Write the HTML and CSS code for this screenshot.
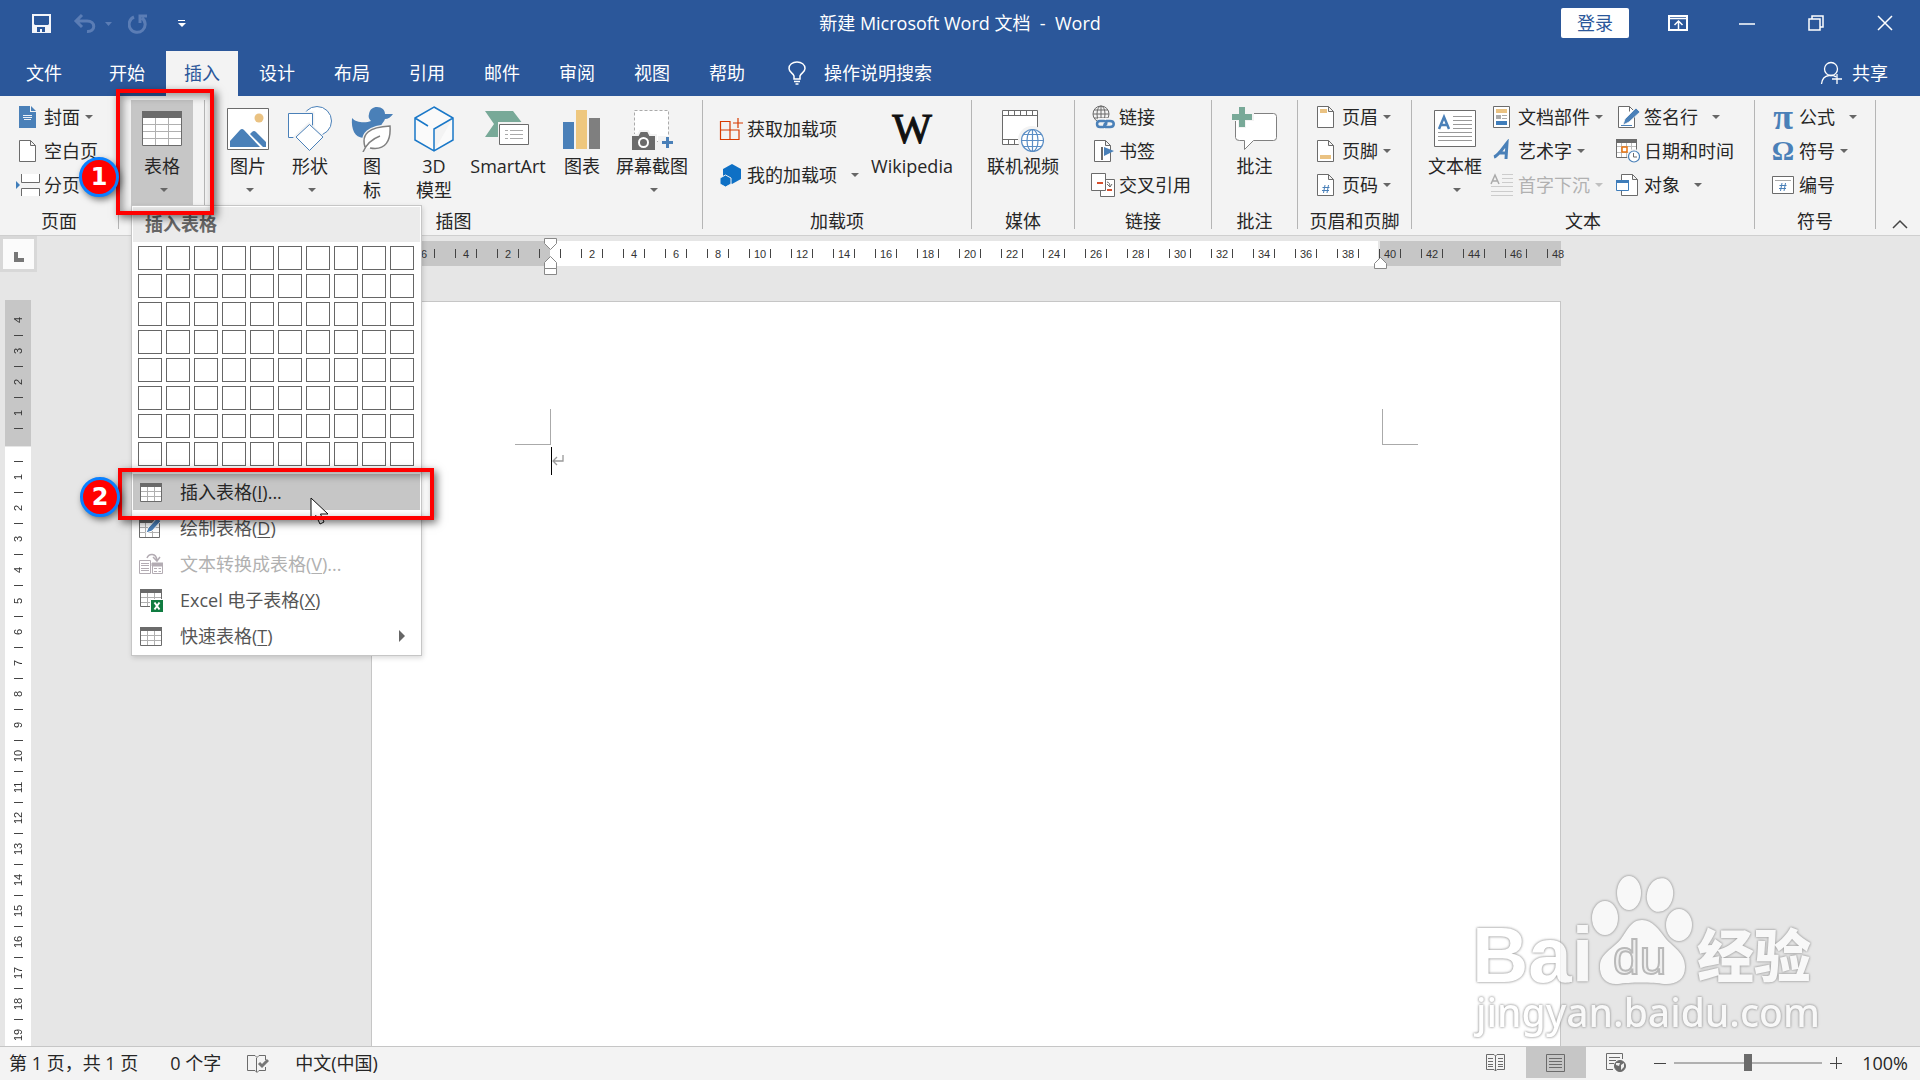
FILE: index.html
```html
<!DOCTYPE html>
<html lang="zh-CN">
<head>
<meta charset="utf-8">
<title>新建 Microsoft Word 文档 - Word</title>
<link rel="stylesheet" href="styles.css">
</head>
<body>
<header class="titlebar">
  <div class="quick">
    <button class="qbtn" aria-label="保存"><svg width="20" height="20" viewBox="0 0 20 20"><path fill="#f3f5fa" fill-rule="evenodd" d="M0 0H19V19H0ZM2 2V10L3 11H16L17 10V2ZM5 13V18H8V15H10V18H13V13Z"/></svg></button>
    <button class="qbtn qbtn--undo" aria-label="撤消"><svg width="36" height="20" viewBox="0 0 36 20" fill="none" stroke="#5b7db5" stroke-width="3"><path d="M8 1L2 7L8 13M2 7H13C22 7 22 18 13 17.500"/><path d="M31 8H38L34.500 12Z" fill="#5b7db5" stroke="none"/></svg></button>
    <button class="qbtn" aria-label="重复"><svg width="20" height="20" viewBox="0 0 20 20" fill="none" stroke="#5b7db5" stroke-width="3"><path d="M6 3A8 8 0 1 0 14 4M19 2H12V9"/></svg></button>
    <button class="qbtn qbtn--more" aria-label="自定义快速访问工具栏"><svg width="8" height="8" viewBox="0 0 8 8" fill="#fff"><path d="M0 0H7V1H0ZM0 3H8L4 7Z"/></svg></button>
  </div>
  <h1 class="title">新建 Microsoft Word 文档&nbsp; -&nbsp; Word</h1>
  <div class="winctl">
    <button class="login">登录</button>
    <button class="wbtn" aria-label="功能区显示选项"><svg width="20" height="16" viewBox="0 0 20 16" fill="none" stroke="#fff"><path stroke-width="2" d="M1 1H19V15H1Z"/><path d="M1 3.500H19M10.500 14V6M6.500 10L10.500 6L14.500 10" stroke-width="1.500"/></svg></button>
    <button class="wbtn" aria-label="最小化"><svg width="16" height="16" viewBox="0 0 16 16"><path d="M0 9H16" stroke="#fff" stroke-width="1.500"/></svg></button>
    <button class="wbtn" aria-label="还原"><svg width="16" height="16" viewBox="0 0 16 16" fill="none" stroke="#fff" stroke-width="1.500"><path d="M1 4H12V15H1ZM4 4V1H15V12H12"/></svg></button>
    <button class="wbtn" aria-label="关闭"><svg width="16" height="16" viewBox="0 0 16 16"><path d="M1 1L15 15M15 1L1 15" stroke="#fff" stroke-width="1.500"/></svg></button>
  </div>
</header>
<nav class="tabs">
  <button class="tab tab--file">文件</button>
  <button class="tab">开始</button>
  <button class="tab tab--active">插入</button>
  <button class="tab">设计</button>
  <button class="tab">布局</button>
  <button class="tab">引用</button>
  <button class="tab">邮件</button>
  <button class="tab">审阅</button>
  <button class="tab">视图</button>
  <button class="tab">帮助</button>
  <button class="tell"><svg width="18" height="24" viewBox="0 0 18 24" fill="none" stroke="#fff" stroke-width="1.500"><path d="M6 18V15C5 12 1 11 1 7.500C1 3.500 4.500 1 9 1S17 3.500 17 7.500C17 11 13 12 12 15V18ZM6 20.500H12M7.500 23H10.500"/></svg>操作说明搜索</button>
  <button class="share"><svg width="24" height="24" viewBox="0 0 24 24" fill="none" stroke="#fff" stroke-width="1.300"><circle cx="11" cy="8" r="6.500"/><path d="M1.500 23C2 18 5 15 9 14.500H13C14 15 15 15 16 16M17 13V23M12 18H22"/></svg>共享</button>
</nav>
<section class="ribbon">
  <div class="group group--pages">
    <div class="body">
      <div class="col">
        <button class="small"><svg width="24" height="24" viewBox="0 0 24 24"><path fill="#4a80b8" d="M3 1H14V7H20V23H3ZM15 1L20 6H15Z"/><path d="M7 10l1 1 1-1 1 1 1-1 1 1 1-1 1 1 1-1 1 1M7 12l1 1 1-1 1 1 1-1 1 1 1-1 1 1 1-1 1 1M8 14.500H15" stroke="#fff" fill="none" stroke-width=".9"/></svg>封面<i class="arr"></i></button>
        <button class="small"><svg width="24" height="24" viewBox="0 0 24 24"><path fill="#fff" stroke="#6b6b6b" d="M3.500 1.500H14.500L19.500 6.500V22.500H3.500ZM14.500 1.500V6.500H19.500"/></svg>空白页</button>
        <button class="small"><svg width="24" height="24" viewBox="0 0 24 24"><path fill="#fff" stroke="#6b6b6b" d="M5.500 1V9.500H23.500V1M5.500 23V15.500H23.500V23"/><path fill="#3f7dba" d="M0 8V16L4 12Z"/></svg>分页</button>
      </div>
    </div>
    <div class="label">页面</div>
  </div>
  <div class="group group--table">
    <div class="body">
      <button class="large large--on" aria-expanded="true"><span class="ico"><svg width="40" height="36" viewBox="0 0 40 36"><path fill="#fff" d="M0 0H40V35H0Z"/><path stroke="#b0b0b0" d="M1 13.500H39M1 20.500H39M1 27.500H39M13.500 7V34M26.500 7V34"/><path fill="none" stroke="#6b6b6b" d="M.5.5H39.500V34.500H.5Z"/><path fill="#6b6b6b" d="M0 0H40V7H0Z"/></svg></span><span>表格</span><i class="arr"></i></button>
      <div class="menu" role="menu">
        <div class="menu-head">插入表格</div>
        <div class="picker"></div>
        <button class="item item--hot"><svg width="24" height="24" viewBox="0 0 24 24"><path fill="#fff" stroke="#6b6b6b" d="M1.500 3.500H22.500V21.500H1.500Z"/><path stroke="#b0b0b0" d="M2 11.500H22M2 16.500H22M8.500 7V21M15.500 7V21"/><path fill="#6b6b6b" d="M1 3H23V7H1Z"/></svg><span>插入表格(<u>I</u>)...</span></button>
        <button class="item"><svg width="24" height="24" viewBox="0 0 24 24"><path fill="#fff" stroke="#6b6b6b" d="M.5 3.500H20.500V21.500H.5Z"/><path stroke="#b0b0b0" d="M1 11.500H20M1 16.500H20M6.500 7V21M13.500 7V21"/><path fill="#6b6b6b" d="M0 3H21V7H0Z"/><path d="M7 17L9 12L18 2L22 5L13 15Z" fill="#4a80b8" stroke="#fff"/></svg><span>绘制表格(<u>D</u>)</span></button>
        <button class="item item--off" disabled><svg width="24" height="24" viewBox="0 0 24 24" fill="none" stroke="#b3acb3"><path d="M.5 8.500H11.500V21.500H.5ZM2 11.500H10M2 13.500H10M2 16.500H10M2 18.500H10M13.500 11.500H23.500V21.500H13.500ZM15 16.500H18M19.500 16.500H22M15 19.500H18M19.500 19.500H22"/><path fill="#b3acb3" d="M13 11H24V14H13Z"/><path stroke-width="1.500" d="M8 6C10 1 17 1 18 8M14 5L18 9L21 5"/></svg><span>文本转换成表格(<u>V</u>)...</span></button>
        <button class="item"><svg width="24" height="24" viewBox="0 0 24 24"><path fill="#fff" stroke="#6b6b6b" d="M1.500 1.500H22.500V18.500H1.500Z"/><path stroke="#b0b0b0" d="M2 9.500H22M2 14.500H22M8.500 5V18M15.500 5V18"/><path fill="#6b6b6b" d="M1 1H23V5H1Z"/><path fill="#107c41" stroke="#fff" d="M11.500 11.500H24.500V24.500H11.500Z"/><path d="M15.500 14.500L20.500 21.500M20.500 14.500L15.500 21.500" stroke="#fff" stroke-width="2"/></svg><span>Excel 电子表格(<u>X</u>)</span></button>
        <button class="item"><svg width="24" height="24" viewBox="0 0 24 24"><path fill="#fff" stroke="#6b6b6b" d="M1.500 3.500H22.500V21.500H1.500Z"/><path stroke="#b0b0b0" d="M2 11.500H22M2 16.500H22M8.500 7V21M15.500 7V21"/><path fill="#6b6b6b" d="M1 3H23V7H1Z"/></svg><span>快速表格(<u>T</u>)</span><i class="sub"></i></button>
        <svg class="pointer" width="20" height="30" viewBox="0 0 20 30"><path fill="#fff" stroke="#111" d="M1 1V23L6 18.500L10 27L14 25L10.500 17H18Z"/></svg>
      </div>
      <div class="frame frame--one"></div><div class="badge badge--one">1</div>
      <div class="frame frame--two"></div><div class="badge badge--two">2</div>
    </div>
  </div>
  <div class="group group--art">
    <div class="body">
      <button class="large"><span class="ico"><svg width="42" height="42" viewBox="0 0 42 42"><path fill="#fff" stroke="#6b6b6b" d="M.5.5H41.500V41.500H.5Z"/><circle cx="32" cy="10" r="4.500" fill="#eac282"/><path fill="#4a80b8" d="M3 39V33L13 22Q15 20 17 22L33 39ZM23 26L25 24Q27 22 29 24L39 34V39H36Z"/></svg></span><span>图片</span><i class="arr"></i></button>
      <button class="large"><span class="ico"><svg width="46" height="46" viewBox="0 0 46 46" fill="#fff" stroke="#4a80b8"><circle cx="30" cy="15" r="14.500"/><path stroke="#f3f3f3" stroke-width="3" d="M1 7H26V31H1Z"/><path d="M1.500 7.500H25.500V31.500H1.500Z"/><path stroke="#f3f3f3" stroke-width="3" d="M22 18L36 31L22 45L8 31Z"/><path d="M22.500 18.500L36 31L22.500 44.500L9 31Z"/></svg></span><span>形状</span><i class="arr"></i></button>
      <button class="large"><span class="ico"><svg width="42" height="46" viewBox="0 0 42 46"><path fill="#4a80b8" d="M18 8C19 3 22 1 26 1C31 1 34 4 34 8H42C40 11 37 13 34 13C33 16 31 17 30 20L24 32H12C4 31 0 24 1 12C5 17 15 17 20 15C18 13 17 11 18 8Z"/><path fill="#fff" stroke="#f3f3f3" stroke-width="4" d="M14 41C10 28 18 21 39 20C40 34 35 45 19 42"/><path fill="#fff" stroke="#808080" stroke-width="1.500" d="M14 41C10 28 18 21 39 20C40 34 35 45 19 42M12 46C15 39 21 33 29 30"/></svg></span><span>图<br>标</span></button>
      <button class="large"><span class="ico"><svg width="40" height="46" viewBox="0 0 40 46" fill="#fafafa" stroke="#1a78c8" stroke-width="1.500"><path d="M20 1L39 12V34L20 45L1 34V12ZM39 12L20 23V45M1 12L14 20"/></svg></span><span>3D<br>模型</span></button>
      <button class="large large--wide"><span class="ico"><svg width="46" height="36" viewBox="0 0 46 36"><path fill="#78a998" d="M0 0H28L38 13L28 26H0L9 13Z"/><path fill="#fff" stroke="#f3f3f3" stroke-width="4" d="M15 13H44V34H15Z"/><path fill="#fff" stroke="#6b6b6b" d="M14.500 13.500H43.500V33.500H14.500Z"/><path stroke="#aaa" d="M20 19.500H23M25 19.500H38M20 23.500H23M25 23.500H38M20 27.500H23M25 27.500H38"/></svg></span><span>SmartArt</span></button>
      <button class="large"><span class="ico"><svg width="38" height="40" viewBox="0 0 38 40"><path fill="#4a80b8" d="M0 13H11V40H0Z"/><path fill="#eec77e" d="M13 1H24V40H13Z"/><path fill="#7f7f7f" d="M26 9H37V40H26Z"/></svg></span><span>图表</span></button>
      <button class="large large--mid"><span class="ico"><svg width="42" height="42" viewBox="0 0 42 42"><path fill="#fff" stroke="#aaa" stroke-dasharray="3 2" d="M3.500 2.500H37.500V33.500H3.500Z"/><path fill="#6b6b6b" stroke="#f3f3f3" stroke-width="2" d="M0 27H7L9 23H17L19 27H25V43H0Z"/><path fill="#f3f3f3" d="M27 28H42V42H27Z"/><circle cx="12.500" cy="34.500" r="4.500" fill="none" stroke="#fff" stroke-width="2"/><path d="M31 34.500H42M36.500 29V40" stroke="#4a80b8" stroke-width="3"/></svg></span><span>屏幕截图</span><i class="arr"></i></button>
    </div>
    <div class="label">插图</div>
  </div>
  <div class="group group--addins">
    <div class="body">
      <div class="col col--two">
        <button class="small"><svg width="24" height="24" viewBox="0 0 24 24" fill="none" stroke="#d83b01" stroke-width="1.200"><path d="M1.500 4.500H11V22.500H1.500ZM1.500 13H20V22.500H11M19 1V11M14 6H24"/></svg>获取加载项</button>
        <button class="small"><svg width="24" height="24" viewBox="0 0 24 24"><path fill="#0e70c5" d="M13 1L22 6V16L13 21L4 16V6Z"/><path fill="#0e70c5" stroke="#f3f3f3" d="M6.500 12L12 15V21L6.500 24L1 21V15Z"/></svg>我的加载项<i class="arr arr--split"></i></button>
      </div>
      <button class="large large--wide"><span class="ico wiki">W</span><span>Wikipedia</span></button>
    </div>
    <div class="label">加载项</div>
  </div>
  <div class="group group--media">
    <div class="body">
      <button class="large large--wide"><span class="ico"><svg width="42" height="46" viewBox="0 -4 42 46"><path fill="#fff" stroke="#6b6b6b" d="M.5.5H35.500V34.500H.5Z"/><path fill="none" stroke="#6b6b6b" d="M.5 5.500H35.500M.5 29.500H20M6.500 0V5M12.500 0V5M18.500 0V5M24.500 0V5M30.500 0V5M6.500 30V34M12.500 30V34M18.500 30V34"/><circle cx="30" cy="30" r="14" fill="#f3f3f3"/><g fill="none" stroke="#5b8ec5" stroke-width="1.200"><circle cx="30.500" cy="30.500" r="11" fill="#fff"/><ellipse cx="30.500" cy="30.500" rx="5.500" ry="11"/><path d="M30.500 19.500V41.500M19.500 30.500H41.500M21.500 24.500H39.500M21.500 36.500H39.500"/></g></svg></span><span>联机视频</span></button>
    </div>
    <div class="label">媒体</div>
  </div>
  <div class="group group--links">
    <div class="body">
      <div class="col">
        <button class="small"><svg width="24" height="24" viewBox="0 0 24 24" fill="none"><g stroke="#6b6b6b"><circle cx="10" cy="9" r="8"/><ellipse cx="10" cy="9" rx="4" ry="8"/><path d="M10 1V17M2 9H18M3 5H17M3 13H17"/></g><path stroke="#f3f3f3" stroke-width="6" d="M9 16H22V22H7Z"/><path stroke="#4a80b8" stroke-width="2.500" d="M13 22H9C5 22 5 16 9 16H13C16 16 16 19 14 20M15 16H19C24 16 24 22 19 22H16C12 22 13 19 15 18"/></svg>链接</button>
        <button class="small"><svg width="24" height="24" viewBox="0 0 24 24"><path fill="#fff" stroke="#6b6b6b" d="M3.500 1.500H14.500L19.500 6.500V22.500H3.500ZM14.500 1.500V6.500H19.500"/><path d="M11 8V21" stroke="#6b6b6b" stroke-width="2"/><path fill="#4a80b8" d="M13 8L23 12L13 17Z"/></svg>书签</button>
        <button class="small"><svg width="24" height="24" viewBox="0 0 24 24"><path fill="#fff" stroke="#6b6b6b" d="M9.500 6.500H23.500V23.500H9.500Z"/><path fill="#fff" stroke="#6b6b6b" d="M.5.500H14.500V17.500H.5Z"/><path fill="none" stroke="#6b6b6b" d="M16 9C18 9 19 11 19 14M16 11L19 14L21 11"/><path fill="#d8502e" d="M6 9H12V11H6ZM16 16H21V18H16Z"/></svg>交叉引用</button>
      </div>
    </div>
    <div class="label">链接</div>
  </div>
  <div class="group group--notes">
    <div class="body">
      <button class="large"><span class="ico"><svg width="46" height="46" viewBox="0 0 46 46"><path fill="#fff" stroke="#808080" d="M7.500 7.500H41.500Q44.500 7.500 44.500 10.500V31.500Q44.500 34.500 41.500 34.500H21.500L12.500 43.500V34.500H7.500Q3.500 34.500 3.500 31.500V7.500Z"/><path d="M10 0V22M-1 11H22" stroke="#f3f3f3" stroke-width="8"/><path d="M10 1V21M0 11H20" stroke="#78a998" stroke-width="6"/></svg></span><span>批注</span></button>
    </div>
    <div class="label">批注</div>
  </div>
  <div class="group group--header">
    <div class="body">
      <div class="col">
        <button class="small"><svg width="24" height="24" viewBox="0 0 24 24"><path fill="#fff" stroke="#6b6b6b" d="M3.500 1.500H14.500L19.500 6.500V22.500H3.500ZM14.500 1.500V6.500H19.500"/><path fill="#eac282" d="M6 4H13V8H6Z"/></svg>页眉<i class="arr"></i></button>
        <button class="small"><svg width="24" height="24" viewBox="0 0 24 24"><path fill="#fff" stroke="#6b6b6b" d="M3.500 1.500H14.500L19.500 6.500V22.500H3.500ZM14.500 1.500V6.500H19.500"/><path fill="#eac282" d="M6 16H17V20H6Z"/></svg>页脚<i class="arr"></i></button>
        <button class="small"><svg width="24" height="24" viewBox="0 0 24 24"><path fill="#fff" stroke="#6b6b6b" d="M3.500 1.500H14.500L19.500 6.500V22.500H3.500ZM14.500 1.500V6.500H19.500"/><path stroke="#4a80b8" fill="none" d="M11 12L9.500 20M14.500 12L13 20M8.500 14.500H15.500M8 17.500H15"/></svg>页码<i class="arr"></i></button>
      </div>
    </div>
    <div class="label">页眉和页脚</div>
  </div>
  <div class="group group--text">
    <div class="body">
      <button class="large"><span class="ico"><svg width="42" height="38" viewBox="0 0 42 38"><path fill="#fff" stroke="#6b6b6b" d="M.5.5H41.500V36.500H.5Z"/><path d="M19 6.500H38M19 10.500H38M19 14.500H38M19 18.500H38M4 22.500H38M4 26.500H38M4 30.500H38" stroke="#999"/><path fill="none" stroke="#4a80b8" stroke-width="2.500" d="M5 19L10 7L15 19M7 15H13"/></svg></span><span>文本框</span><i class="arr"></i></button>
      <div class="col col--mid">
        <button class="small"><svg width="24" height="24" viewBox="0 0 24 24"><path fill="#fff" stroke="#6b6b6b" d="M3.500 1.500H19.500V22.500H3.500Z"/><path fill="#eac282" d="M6 4H17V8H6Z"/><path fill="#aaa" d="M6 10H11V14H6ZM12 10H17V11H12ZM12 13H17V14H12Z"/><path fill="#3f7dba" d="M6 16H17V20H6Z"/></svg>文档部件<i class="arr"></i></button>
        <button class="small"><svg width="24" height="24" viewBox="0 0 24 24"><path fill="none" stroke="#4a80b8" stroke-width="3" d="M4 18C8 17 13 9 17 4L16 20M8 14H17"/></svg>艺术字<i class="arr"></i></button>
        <button class="small small--off" disabled><svg width="24" height="24" viewBox="0 0 24 24"><path stroke="#ccc" d="M12 1.500H23M12 5.500H23M12 9.500H23M1 13.500H23M1 18.500H23M1 22.500H23"/><path fill="none" stroke="#aaa" stroke-width="1.500" d="M1 11L5 2L9 11M3 8H8"/></svg>首字下沉<i class="arr"></i></button>
      </div>
      <div class="col">
        <button class="small"><svg width="24" height="24" viewBox="0 0 24 24"><path fill="#fff" stroke="#6b6b6b" d="M2.500 1.500H13.500L18.500 6.500V22.500H2.500ZM13.500 1.500V6.500"/><path fill="#4a80b8" stroke="#f3f3f3" stroke-width=".8" d="M7 20L9 14L20 3L24 7L13 17Z"/><path stroke="#4a80b8" d="M5 20.500H16"/></svg>签名行<i class="arr arr--split"></i></button>
        <button class="small"><svg width="24" height="24" viewBox="0 0 24 24"><path fill="#fff" stroke="#6b6b6b" d="M.5.5H20.500V18.500H.5Z"/><path stroke="#bbb" d="M1 7.500H20M1 13.500H20M5.500 4V18M10.500 4V18M15.500 4V18"/><path fill="#6b6b6b" d="M0 0H21V4H0Z"/><path fill="#fff" stroke="#e8730f" stroke-width="1.500" d="M6 8H11V13H6Z"/><circle cx="18" cy="17" r="6.500" fill="#f3f3f3" stroke="#f3f3f3"/><circle cx="18" cy="17.500" r="5.500" fill="#fff" stroke="#4a80b8" stroke-width="1.200"/><path fill="none" stroke="#6b6b6b" d="M17.500 14V18H21"/></svg>日期和时间</button>
        <button class="small"><svg width="24" height="24" viewBox="0 0 24 24"><path fill="#fff" stroke="#6b6b6b" d="M5.500 1.500H16.500L21.500 6.500V22.500H5.500ZM16.500 1.500V6.500H21.500"/><path fill="#fff" stroke="#3f7dba" d="M.5 7.500H12.500V17.500H.5Z"/><path fill="#3f7dba" d="M0 7H13V10H0Z"/></svg>对象<i class="arr arr--split"></i></button>
      </div>
    </div>
    <div class="label">文本</div>
  </div>
  <div class="group group--symbols">
    <div class="body">
      <div class="col">
        <button class="small"><span class="glyph glyph--pi">π</span>公式<i class="arr arr--split"></i></button>
        <button class="small"><span class="glyph">Ω</span>符号<i class="arr"></i></button>
        <button class="small"><svg width="24" height="24" viewBox="0 0 24 24"><path fill="#fff" stroke="#6b6b6b" d="M1.500 3.500H22.500V20.500H1.500Z"/><path stroke="#aaa" d="M4 7.500H20"/><path stroke="#4a80b8" d="M11 10L9.500 18M14.500 10L13 18M8.500 12.500H15.500M8 15.500H15"/></svg>编号</button>
      </div>
    </div>
    <div class="label">符号</div>
  </div>
  <button class="collapse" aria-label="折叠功能区"><svg width="16" height="10" viewBox="0 0 16 10"><path d="M1 9L8 2L15 9" fill="none" stroke="#444" stroke-width="1.500"/></svg></button>
</section>
<main class="work">
  <aside class="side">
    <button class="tabstop" aria-label="制表符"><svg width="10" height="10" viewBox="0 0 10 10"><path fill="#777" d="M0 0H4V6H10V10H0Z"/></svg></button>
    <div class="vruler"><div class="vseg vseg--margin"></div><div class="vseg vseg--text"></div></div>
  </aside>
  <div class="canvas">
    <div class="hruler">
      <svg class="mark mark--left" width="13" height="37" viewBox="0 0 13 37" fill="#fff" stroke="#888"><path d="M.5.5H12.500V5.500L6.500 11.500L.5 5.500ZM6.500 18.500L12.500 24.500V30.500H.5V24.500ZM.5 30.500H12.500V36.500H.5Z"/></svg>
      <svg class="mark mark--right" width="13" height="12" viewBox="0 0 13 12" fill="#fff" stroke="#888"><path d="M6.500.5L12.500 6.500V11.500H.5V6.500Z"/></svg>
    </div>
    <article class="page">
      <div class="crops"><i class="crop crop--left"></i><i class="crop crop--right"></i></div>
      <p class="para"><i class="caret"></i><svg width="12" height="12" viewBox="0 0 12 12" fill="none" stroke="#999" stroke-width="1.300"><path d="M11 0V6H1M5 2L1 6L5 10"/></svg></p>
    </article>
  </div>
  <svg class="watermark" width="360" height="180" viewBox="0 0 360 180">
    <g class="wm">
      <text class="wm-logo" x="2" y="116">Bai</text>
      <ellipse cx="135" cy="52" rx="13" ry="17"/><ellipse cx="159" cy="27" rx="12" ry="17"/><ellipse cx="190" cy="29" rx="13" ry="17" transform="rotate(12 190 29)"/><ellipse cx="209" cy="59" rx="13" ry="16"/>
      <path d="M172 54C183 54 189 64 196 73C203 81 215 87 215 101C215 114 205 119 194 118C183 116 159 116 148 118C137 119 129 112 130 99C131 87 143 83 151 73C157 65 161 54 172 54Z"/>
      <text class="wm-cn" x="227" y="111">经验</text>
      <text class="wm-url" x="6" y="161">jingyan.baidu.com</text>
    </g>
    <text class="wm-du" x="143" y="108">du</text>
  </svg>
</main>
<footer class="status">
  <span class="st-page">第 1 页，共 1 页</span>
  <span class="st-words">0 个字</span>
  <svg class="st-proof" width="22" height="20" viewBox="0 0 22 20" fill="none" stroke="#6b6b6b"><path d="M.5 1.500H8L10 3.500L12 1.500H18.500V6M.5 1.500V16.500H8L10 18.500L12 16.500H18.500V13M9.500 4V18"/><path stroke-width="3" stroke="#777" d="M12 9L15 12L21 6"/></svg>
  <span>中文(中国)</span>
  <div class="views">
    <button class="view" aria-label="阅读视图"><svg width="20" height="18" viewBox="0 0 20 18" fill="none" stroke="#6b6b6b"><path d="M.5.5H8L9.500 2L11 .5H18.500V15.500H11L9.500 17L8 15.500H.5ZM9.500 2V17M2 4.500H7M2 7.500H7M2 10.500H7M2 12.500H7M12 4.500H17M12 7.500H17M12 10.500H17M12 12.500H17"/></svg></button>
    <button class="view view--on" aria-label="页面视图"><svg width="20" height="18" viewBox="0 0 20 18" fill="none" stroke="#6b6b6b"><path d="M.5.5H18.500V17.500H.5ZM3 4.500H16M3 7.500H16M3 10.500H16M3 13.500H16"/></svg></button>
    <button class="view" aria-label="Web 版式视图"><svg width="20" height="20" viewBox="0 0 20 20" fill="none" stroke="#6b6b6b"><path d="M7 16.500H.5V.5H16.500V6M3 4.500H14M3 7.500H10M3 10.500H8"/><circle cx="14" cy="13" r="5.500" fill="#6b6b6b"/><path fill="#eee" stroke="none" d="M10 10L14 10L13 13L10 12ZM15 12L18 10V14L15 17Z"/></svg></button>
    <button class="zbtn" aria-label="缩小"><svg width="12" height="12" viewBox="0 0 12 12"><path d="M0 6.500H12" stroke="#444"/></svg></button>
    <input class="zoom" type="range" min="0" max="100" value="50" aria-label="显示比例">
    <button class="zbtn" aria-label="放大"><svg width="12" height="12" viewBox="0 0 12 12"><path d="M0 6.500H12M6.500 0V12" stroke="#444"/></svg></button>
    <button class="pct">100%</button>
  </div>
</footer>
<script src="app.js"></script>
</body>
</html>
```
FILE: styles.css
```css
* { box-sizing: border-box; }
body {
  margin: 0;
  height: 100vh;
  display: flex;
  flex-direction: column;
  overflow: hidden;
  background: #e6e6e6;
  color: #262626;
  font: 18px/24px "Open Sans", "Noto Sans CJK SC", sans-serif;
}
button {
  font: inherit;
  color: inherit;
  background: none;
  border: 0;
  padding: 0;
  margin: 0;
  white-space: nowrap;
}
svg { display: block; flex: none; }

/* title bar */
.titlebar {
  height: 51px;
  padding-bottom: 5px;
  flex: none;
  display: grid;
  grid-template-columns: 1fr auto 1fr;
  align-items: center;
  background: #2b579a;
  color: #fff;
}
.quick { display: flex; align-items: center; padding: 2px 0 0 32px; }
.qbtn { margin-right: 22px; }
.qbtn--undo { margin-right: 18px; }
.qbtn--undo svg { overflow: visible; }
.qbtn--more { margin-left: 8px; }
.title { margin: 0; font-size: 18px; font-weight: 400; }
.winctl { display: flex; align-items: center; justify-content: flex-end; padding-right: 1px; }
.login {
  width: 68px;
  height: 30px;
  margin-right: 14px;
  border-radius: 2px;
  background: #fff;
  color: #2b579a;
}
.wbtn { width: 69px; height: 40px; display: flex; align-items: center; justify-content: center; }

/* tab strip */
.tabs {
  height: 45px;
  flex: none;
  display: flex;
  gap: 3px;
  background: #2b579a;
  color: #fff;
}
.tab { padding: 0 18px 2px; }
.tab--file { padding: 0 26px 2px; }
.tab--active { background: #f3f3f3; color: #2b579a; }
.tell, .share { display: flex; align-items: center; gap: 18px; padding-bottom: 2px; }
.tell { margin-left: 22px; }
.share { gap: 8px; margin-left: auto; padding-right: 32px; }

/* ribbon */
.ribbon {
  height: 140px;
  flex: none;
  display: flex;
  background: #f3f3f3;
  border-bottom: 1px solid #cfcfcf;
  position: relative;
  z-index: 2;
}
.group {
  height: 129px;
  margin-top: 4px;
  flex: none;
  display: flex;
  flex-direction: column;
  border-right: 1px solid #b5b5b5;
}
.body { height: 105px; display: flex; position: relative; }
.label { margin-top: 8px; line-height: 16px; text-align: center; white-space: nowrap; }
.group--pages { width: 119px; }
.group--pages .body { padding-left: 16px; }
.group--table { width: 86px; }
.group--table .body { padding-left: 12px; }
.group--art { width: 498px; }
.group--art .body { padding-left: 12px; }
.group--addins { width: 269px; }
.group--addins .body { padding-left: 16px; justify-content: space-between; padding-right: 16px; }
.group--media { width: 103px; }
.group--media .body, .group--notes .body { justify-content: center; }
.group--links { width: 137px; }
.group--links .body { padding-left: 16px; }
.group--notes { width: 86px; }
.group--header { width: 114px; }
.group--header .body { padding-left: 16px; }
.group--text { width: 343px; }
.group--text .body { padding-left: 12px; }
.group--symbols { width: 121px; }
.group--symbols .body { padding-left: 16px; }

.large {
  width: 62px;
  height: 105px;
  padding-top: 4px;
  display: flex;
  flex-direction: column;
  align-items: center;
}
.large--on { background: #c6c6c6; }
.large--mid { width: 78px; }
.large--wide { width: 86px; }
.ico { height: 50px; padding: 1px 0 1px; display: flex; align-items: center; }
.wiki { font: 400 42px "Liberation Serif", serif; color: #111; -webkit-text-stroke: 1px #111; }
.large .arr { margin: 10px 0 0 3px; }
.col { height: 102px; display: flex; flex-direction: column; }
.col--two { padding-top: 6px; height: 98px; }
.col--mid { width: 126px; margin-left: 4px; }
.small { flex: 1; display: flex; align-items: center; gap: 4px; }
.small--off { color: #b1b1b1; }
.small--off .arr { border-top-color: #c0c0c0; }
.glyph { width: 24px; color: #4a80b8; font: 700 28px/24px "Liberation Serif", serif; text-align: center; }
.glyph--pi { font-size: 36px; }
.arr {
  width: 8px;
  height: 4px;
  margin-left: 1px;
  border: 4px solid transparent;
  border-top-color: #666;
  border-bottom: 0;
}
.arr--split { margin-left: 10px; }
.collapse { margin: 120px 0 0 16px; height: 16px; }

/* table drop-down */
.menu {
  position: absolute;
  left: 12px;
  top: 105px;
  width: 291px;
  padding: 1px;
  background: #fff;
  border: 1px solid #c6c6c6;
  box-shadow: 1px 2px 5px rgba(0, 0, 0, .15);
}
.menu-head { height: 35px; padding-left: 12px; line-height: 34px; font-weight: 700; color: #666; background: #ebebeb; }
.picker {
  display: grid;
  grid-template-columns: repeat(10, 24px);
  grid-auto-rows: 24px;
  gap: 4px;
  padding: 4px 5px 8px;
}
.picker button { border: 1px solid #666; background: #fff; }
.item { width: 100%; height: 36px; padding: 0 15px 0 6px; display: flex; align-items: center; gap: 17px; color: #555; }
.item--hot { background: #c6c6c6; color: #262626; }
.item--off { color: #b1b1b1; }
.item u { text-underline-offset: 2px; text-decoration-thickness: 1px; }
.sub { margin-left: auto; border: 6px solid transparent; border-left-color: #666; border-right: 0; }
.pointer { position: absolute; left: 178px; top: 291px; }

/* callouts */
.frame { position: absolute; border: 4px solid #f00; box-shadow: 3px 3px 8px rgba(0, 0, 0, .55), inset 3px 3px 8px rgba(0, 0, 0, .4); pointer-events: none; }
.frame--one { left: -3px; top: -11px; width: 98px; height: 126px; }
.frame--two { left: -1px; top: 368px; width: 316px; height: 52px; }
.badge {
  position: absolute;
  width: 40px;
  height: 40px;
  border: 3px solid #0a80ff;
  border-radius: 50%;
  background: #f00;
  color: #fff;
  font: 700 24px/34px "DejaVu Sans", sans-serif;
  text-align: center;
  box-shadow: 2px 3px 6px rgba(0, 0, 0, .5);
}
.badge--one { left: -40px; top: 57px; }
.badge--two { left: -39px; top: 377px; }

/* document area */
.work { flex: 1; min-height: 0; display: flex; position: relative; overflow: hidden; }
.side { width: 38px; flex: none; display: flex; flex-direction: column; }
.tabstop {
  width: 37px;
  height: 36px;
  flex: none;
  border: 3px solid #d8d8d8;
  background: #fbfbfb;
  display: flex;
  align-items: center;
  justify-content: center;
  padding-top: 5px;
}
.vruler { flex: 1; min-height: 0; width: 26px; margin: 28px 0 0 5px; display: flex; flex-direction: column; overflow: hidden; }
.vseg { display: flex; flex-direction: column; align-items: center; }
.vseg--margin { height: 146px; flex: none; padding-top: 5px; background: #c6c6c6; }
.vseg--text { flex: 1; min-height: 0; margin-top: 1px; padding-top: 14px; background: #fff; overflow: hidden; }
.vcell {
  width: 9px;
  height: 31px;
  flex: none;
  border-bottom: 1px solid #444;
  display: flex;
  align-items: center;
  justify-content: center;
  writing-mode: vertical-rl;
  transform: rotate(180deg);
  font: 11px/9px "Liberation Sans", sans-serif;
  color: #333;
}
.vseg--margin .vcell { border-bottom: 0; border-top: 1px solid #444; }
.canvas { flex: 1; min-width: 0; padding: 5px 26px 0 0; display: flex; flex-direction: column; align-items: center; }
.hruler {
  width: 1190px;
  height: 25px;
  flex: none;
  display: flex;
  align-items: center;
  position: relative;
  background: linear-gradient(to right, #c6c6c6 179px, #fff 179px, #fff 1007px, #e6e6e6 1007px, #e6e6e6 1009px, #c6c6c6 1009px);
}
.hcell {
  width: 21px;
  height: 9px;
  flex: none;
  border-left: 1px solid #444;
  font: 11px/11px "Liberation Sans", sans-serif;
  color: #333;
  text-align: center;
}
.mark { position: absolute; }
.mark--left { left: 173px; top: -3px; }
.mark--right { left: 1003px; top: 16px; }
.page {
  width: 1190px;
  flex: 1;
  min-height: 0;
  margin-top: 35px;
  padding: 107px 142px 0 143px;
  background: #fff;
  border: 1px solid #c6c6c6;
  border-bottom: 0;
}
.crops { display: flex; justify-content: space-between; }
.crop { width: 36px; height: 36px; border: 0 solid #aaa; border-bottom-width: 1px; }
.crop--left { border-right-width: 1px; }
.crop--right { border-left-width: 1px; }
.para { margin: 2px 0 0 36px; display: flex; align-items: center; }
.caret { width: 1px; height: 28px; background: #000; }
.watermark { position: absolute; right: 90px; bottom: 0; opacity: .75; }
.wm { fill: #fff; filter: drop-shadow(0 0 1px #888) drop-shadow(0 0 1px #aaa); }
.wm-logo { font: 700 78px "Liberation Sans", sans-serif; }
.wm-cn { font: 900 57px "Noto Sans CJK SC", sans-serif; }
.wm-url { font: 500 39px "Noto Sans", sans-serif; }
.wm-du { font: 48px "Liberation Sans", sans-serif; fill: #f3f3f3; stroke: #aaa; stroke-width: 2px; }

/* status bar */
.status {
  height: 34px;
  flex: none;
  padding-left: 9px;
  display: flex;
  align-items: center;
  background: #f3f3f3;
  border-top: 1px solid #c6c6c6;
}
.st-words { margin-left: 32px; }
.st-proof { margin: 0 26px; }
.status > span, .pct { padding-bottom: 2px; }
.views { margin-left: auto; align-self: stretch; display: flex; align-items: center; }
.view { width: 60px; align-self: stretch; margin-bottom: 2px; display: flex; align-items: center; justify-content: center; }
.view--on { background: #c6c6c6; }
.zbtn { padding: 0 8px 2px; }
.zoom { -webkit-appearance: none; appearance: none; width: 148px; height: 20px; margin: 0 0 2px; background: none; }
.zoom::-webkit-slider-runnable-track { height: 2px; background: #b0b0b0; }
.zoom::-webkit-slider-thumb { -webkit-appearance: none; width: 8px; height: 17px; margin-top: -8px; background: #6b6b6b; }
.pct { margin: 0 12px; }
```
FILE: app.js
```js
// Fills the rulers and the table size picker.
function add(parent, tag, cls, text) {
  const el = document.createElement(tag);
  if (cls) el.className = cls;
  if (text) el.textContent = text;
  parent.appendChild(el);
  return el;
}

const picker = document.querySelector('.picker');
for (let i = 0; i < 80; i++) {
  add(picker, 'button', '', '').setAttribute('aria-label', (i % 10 + 1) + '×' + (Math.floor(i / 10) + 1));
}

const ruler = document.querySelector('.hruler');
for (let n = -8; n <= 48; n++) {
  add(ruler, 'span', 'hcell', n % 2 === 0 && n !== 0 ? String(Math.abs(n)) : '');
}

const margin = document.querySelector('.vseg--margin');
for (let n = 4; n >= 1; n--) add(margin, 'span', 'vcell', String(n));
const text = document.querySelector('.vseg--text');
for (let n = 1; n <= 19; n++) add(text, 'span', 'vcell', String(n));
```
